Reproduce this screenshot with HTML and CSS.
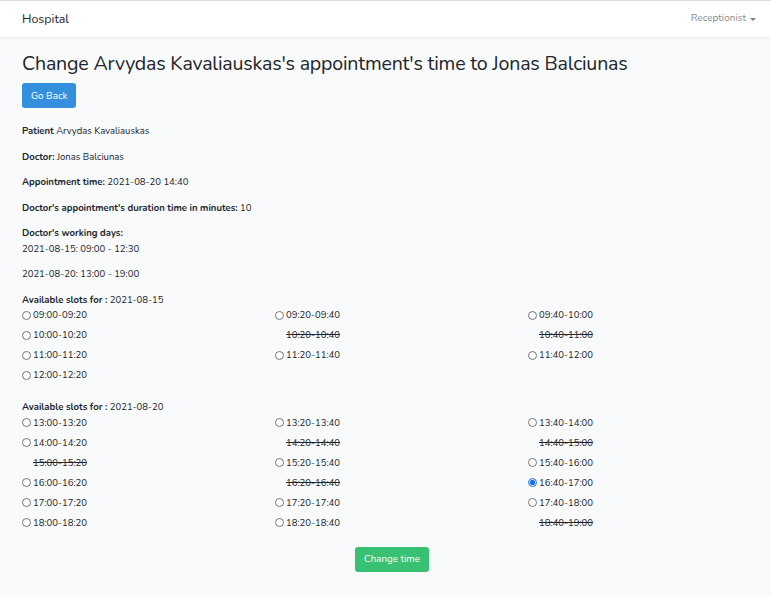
FILE: index.html
```html
<!DOCTYPE html>
<html lang="en">
<head>
<meta charset="utf-8">
<title>Hospital</title>
<link rel="stylesheet" href="styles.css">
</head>
<body>
<nav class="navbar">
  <div class="container nav-inner">
    <a class="brand" href="#">Hospital</a>
    <a class="user" href="#">Receptionist <span class="caret"></span></a>
  </div>
</nav>
<main class="container">
  <h1 class="title">Change Arvydas Kavaliauskas's appointment's time to Jonas Balciunas</h1>
  <a class="btn btn-blue" href="#">Go Back</a>
  <p class="first"><b>Patient</b> Arvydas Kavaliauskas</p>
  <p><b>Doctor:</b> Jonas Balciunas</p>
  <p><b>Appointment time:</b> 2021-08-20 14:40</p>
  <p><b>Doctor's appointment's duration time in minutes:</b> 10</p>
  <p><b>Doctor's working days:</b><br>2021-08-15: 09:00 - 12:30</p>
  <p>2021-08-20: 13:00 - 19:00</p>

  <form class="slots-form">
    <div class="day">
      <div class="day-label"><b>Available slots for :</b> 2021-08-15</div>
      <div class="slots">
        <label class="slot"><input type="radio" name="slot"> 09:00-09:20</label>
        <label class="slot"><input type="radio" name="slot"> 09:20-09:40</label>
        <label class="slot"><input type="radio" name="slot"> 09:40-10:00</label>
        <label class="slot"><input type="radio" name="slot"> 10:00-10:20</label>
        <span class="slot taken"><span class="spacer"></span><s>10:20-10:40</s></span>
        <span class="slot taken"><span class="spacer"></span><s>10:40-11:00</s></span>
        <label class="slot"><input type="radio" name="slot"> 11:00-11:20</label>
        <label class="slot"><input type="radio" name="slot"> 11:20-11:40</label>
        <label class="slot"><input type="radio" name="slot"> 11:40-12:00</label>
        <label class="slot"><input type="radio" name="slot"> 12:00-12:20</label>
      </div>
    </div>
    <div class="day">
      <div class="day-label"><b>Available slots for :</b> 2021-08-20</div>
      <div class="slots">
        <label class="slot"><input type="radio" name="slot"> 13:00-13:20</label>
        <label class="slot"><input type="radio" name="slot"> 13:20-13:40</label>
        <label class="slot"><input type="radio" name="slot"> 13:40-14:00</label>
        <label class="slot"><input type="radio" name="slot"> 14:00-14:20</label>
        <span class="slot taken"><span class="spacer"></span><s>14:20-14:40</s></span>
        <span class="slot taken"><span class="spacer"></span><s>14:40-15:00</s></span>
        <span class="slot taken"><span class="spacer"></span><s>15:00-15:20</s></span>
        <label class="slot"><input type="radio" name="slot"> 15:20-15:40</label>
        <label class="slot"><input type="radio" name="slot"> 15:40-16:00</label>
        <label class="slot"><input type="radio" name="slot"> 16:00-16:20</label>
        <span class="slot taken"><span class="spacer"></span><s>16:20-16:40</s></span>
        <label class="slot"><input type="radio" name="slot" checked> 16:40-17:00</label>
        <label class="slot"><input type="radio" name="slot"> 17:00-17:20</label>
        <label class="slot"><input type="radio" name="slot"> 17:20-17:40</label>
        <label class="slot"><input type="radio" name="slot"> 17:40-18:00</label>
        <label class="slot"><input type="radio" name="slot"> 18:00-18:20</label>
        <label class="slot"><input type="radio" name="slot"> 18:20-18:40</label>
        <span class="slot taken"><span class="spacer"></span><s>18:40-19:00</s></span>
      </div>
    </div>
    <div class="submit-row">
      <button type="button" class="btn btn-green">Change time</button>
    </div>
  </form>
</main>
</body>
</html>
```
FILE: styles.css
```css
* { box-sizing: border-box; }
html, body { margin: 0; padding: 0; }
body {
  background: #f8fafc;
  font-family: "Nunito", "Lato", "Noto Sans", sans-serif;
  font-size: 9.5px;
  line-height: 15.5px;
  color: #212529;
}
.container {
  width: 738px;
  margin-left: 22px;
}
.navbar {
  background: #fff;
  border-top: 1px solid #dcdde1;
  height: 37px;
  box-shadow: 0 1px 2px rgba(0,0,0,0.06);
}
.nav-inner {
  display: flex;
  justify-content: space-between;
  align-items: center;
  height: 36px;
}
.brand {
  font-size: 12.4px;
  color: #212529;
  text-decoration: none;
}
.user {
  color: rgba(0,0,0,0.5);
  text-decoration: none;
  font-size: 10px;
  margin-right: 4px;
  display: flex;
  align-items: center;
  gap: 4px;
}
.caret {
  width: 0;
  height: 0;
  border-left: 3px solid transparent;
  border-right: 3px solid transparent;
  border-top: 3.5px solid rgba(0,0,0,0.5);
}
.title {
  font-weight: 400;
  font-size: 19.6px;
  letter-spacing: -0.2px;
  line-height: 26px;
  margin: 14px 0 6px;
}
.btn {
  display: inline-block;
  border: 0;
  border-radius: 3px;
  color: #fff;
  font-family: inherit;
  font-size: 9.8px;
  line-height: 16px;
  text-decoration: none;
  cursor: pointer;
}
.btn-blue { background: #3490dc; height: 25px; padding: 4.5px 9px; }
.btn-green { background: #38c172; height: 25px; padding: 4.5px 9px; margin-left: 2px; }
p { margin: 0 0 10px; }
p.first { margin-top: 15px; }
b { font-weight: 700; }
.day { margin-bottom: 12px; }
.day-label { line-height: 15.5px; }
.slots {
  display: grid;
  grid-template-columns: 232px 232px 232px;
  column-gap: 21px;
}
.slot {
  display: flex;
  align-items: center;
  height: 20px;
  padding-bottom: 4px;
  white-space: nowrap;
}
.slot input {
  width: 9px;
  height: 9px;
  margin: 0 2px 0 0;
  accent-color: #1a73e8;
}
.spacer { display: inline-block; width: 11px; }
s { text-decoration: line-through; }
.submit-row {
  display: flex;
  justify-content: center;
  padding-top: 0;
}
```
